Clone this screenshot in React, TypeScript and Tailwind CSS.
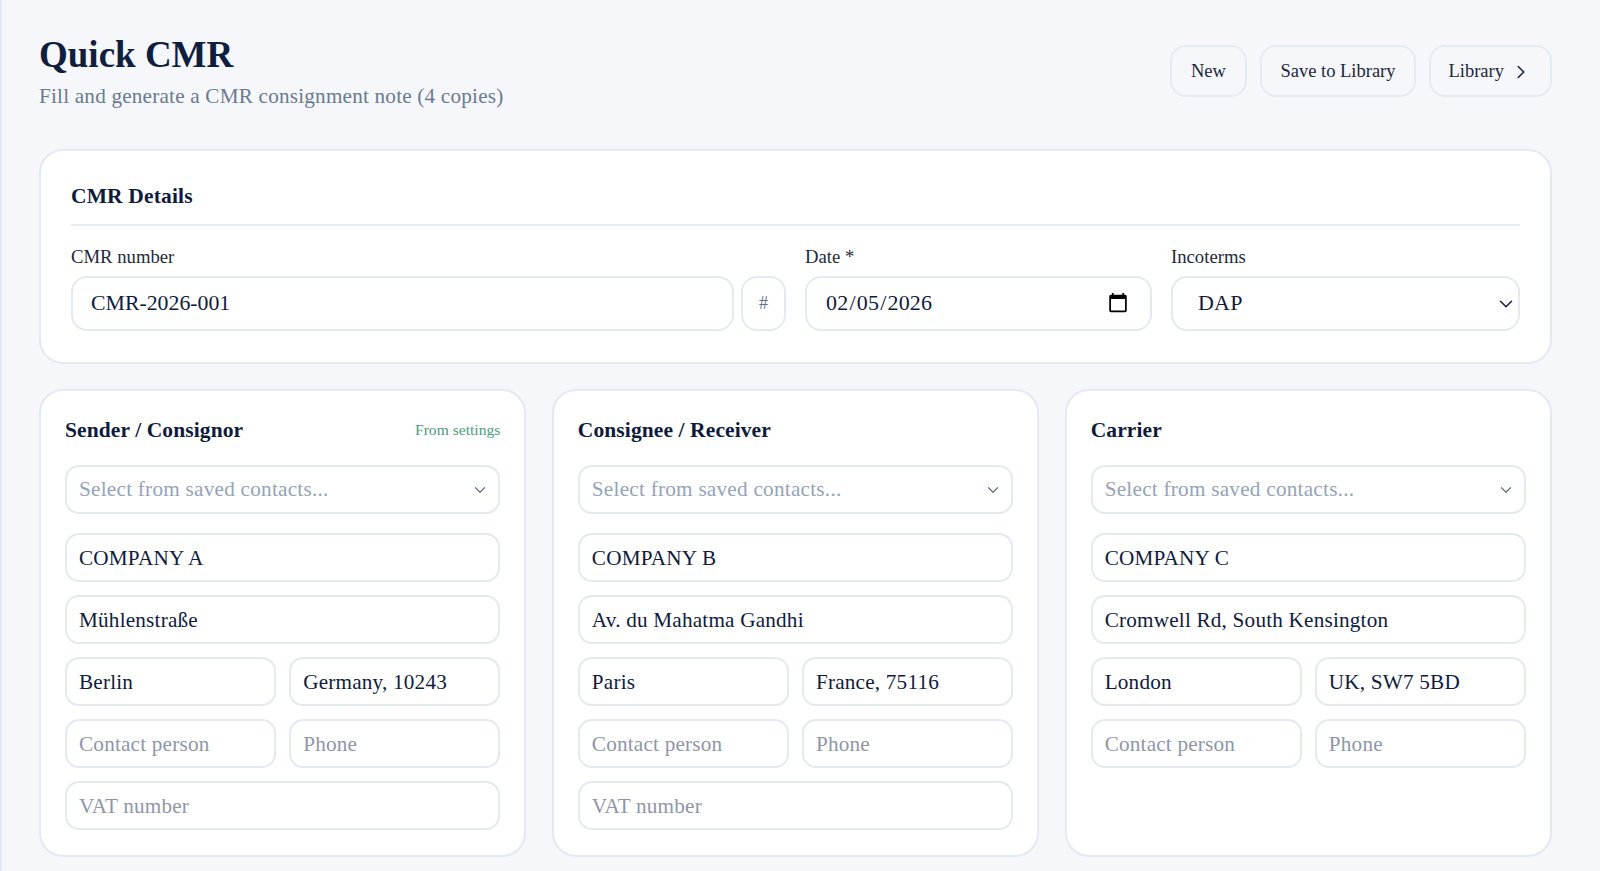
import { ChevronDown, ChevronRight } from "lucide-react";

const serif = "font-['Liberation_Serif','Times_New_Roman',serif]";
const field =
  "h-[49px] w-full min-w-0 rounded-[14px] border-2 border-[#e4e9f2] bg-white px-[12px] pt-[1px] text-[21.2px] text-[#0f1b3d] outline-none placeholder:text-[#8e96a8] tracking-[0.2px]";

function ContactSelect() {
  return (
    <div className="relative">
      <select
        defaultValue=""
        className="h-[49px] w-full appearance-none rounded-[14px] border-2 border-[#e4e9f2] bg-white px-[12px] text-[21.2px] tracking-[0.25px] text-[#94a3b8] outline-none"
      >
        <option value="">Select from saved contacts...</option>
      </select>
      <ChevronDown className="pointer-events-none absolute right-[11px] top-[15.5px] h-[18px] w-[18px] text-[#64748b]" strokeWidth={1.75} />
    </div>
  );
}

function Party({
  title,
  note,
  name,
  street,
  city,
  country,
  vat = true,
}: {
  title: string;
  note?: string;
  name: string;
  street: string;
  city: string;
  country: string;
  vat?: boolean;
}) {
  return (
    <section className="rounded-[24px] border-2 border-[#e4e9f2] bg-white px-[24px] pb-[25px] pt-[24px]">
      <div className="mb-[20px] flex h-[30px] items-center justify-between">
        <h2 className="text-[21.5px] font-bold tracking-[0.1px] text-[#0f1b3d]">{title}</h2>
        {note && <span className="text-[15.6px] text-[#4a9d7c]">{note}</span>}
      </div>
      <div className="flex flex-col gap-[13px]">
        <div className="mb-[6px]">
          <ContactSelect />
        </div>
        <input className={field} defaultValue={name} />
        <input className={field} defaultValue={street} />
        <div className="grid grid-cols-2 gap-[13px]">
          <input className={field} defaultValue={city} />
          <input className={field} defaultValue={country} />
        </div>
        <div className="grid grid-cols-2 gap-[13px]">
          <input className={field} placeholder="Contact person" />
          <input className={field} placeholder="Phone" />
        </div>
        {vat ? <input className={field} placeholder="VAT number" /> : <div className="h-[49px]" />}
      </div>
    </section>
  );
}

const headerBtn =
  "flex h-[52px] items-center rounded-[16px] border-2 border-[#e6ebf3] bg-[#f5f7fa] pt-[2px] text-[18.5px] text-[#1b2740]";

export default function App() {
  return (
    <div className={`${serif} min-h-[871px] overflow-hidden border-l-2 border-[#e4e9f2] bg-[#f5f7fa] pl-[37px] pr-[48px] pt-[33px]`}>
      <header className="flex items-start justify-between">
        <div>
          <h1 className="text-[37px] font-bold leading-[44px] text-[#0f1f3d]">Quick CMR</h1>
          <p className="mt-[5px] text-[21.2px] leading-[28px] tracking-[0.2px] text-[#6b7a90]">
            Fill and generate a CMR consignment note (4 copies)
          </p>
        </div>
        <div className="mt-[12px] flex gap-[13px]">
          <button className={`${headerBtn} px-[19.5px]`}>New</button>
          <button className={`${headerBtn} px-[18px]`}>Save to Library</button>
          <button className={`${headerBtn} pl-[18px] pr-[18px]`}>
            Library
            <ChevronRight className="ml-[6px] h-[22px] w-[22px]" strokeWidth={1.75} />
          </button>
        </div>
      </header>

      <section className="mt-[39px] rounded-[24px] border-2 border-[#e4e9f2] bg-white px-[30px] pb-[31px] pt-[30px]">
        <h2 className="border-b-2 border-[#e8edf3] pb-[13px] text-[21.5px] font-bold leading-[30px] tracking-[0.15px] text-[#0f1b3d]">
          CMR Details
        </h2>
        <div className="mt-[19px] grid grid-cols-[715px_347px_1fr] gap-x-[19px]">
          <div>
            <label className="mb-[7px] block text-[18.7px] leading-[24px] text-[#1e293b]">CMR number</label>
            <div className="flex gap-[7px]">
              <input
                className="h-[55px] min-w-0 flex-1 rounded-[16px] border-2 border-[#e4e9f2] bg-white px-[18px] text-[21.8px] text-[#0f1b3d] outline-none"
                defaultValue="CMR-2026-001"
              />
              <button className="h-[55px] w-[45px] shrink-0 rounded-[16px] border-2 border-[#e4e9f2] bg-white text-[18px] text-[#64748b]">
                #
              </button>
            </div>
          </div>
          <div>
            <label className="mb-[7px] block text-[18.7px] leading-[24px] text-[#1e293b]">Date *</label>
            <input
              type="date"
              lang="en-US"
              defaultValue="2026-02-05"
              className="h-[55px] w-full rounded-[16px] border-2 border-[#e4e9f2] bg-white pb-[2px] pl-[18px] pr-[19px] text-[22px] tracking-[0.2px] text-[#0f1b3d] outline-none"
            />
          </div>
          <div>
            <label className="mb-[7px] block text-[18.7px] leading-[24px] text-[#1e293b]">Incoterms</label>
            <div className="relative">
              <select
                defaultValue="DAP"
                className="h-[55px] w-full appearance-none rounded-[16px] border-2 border-[#e4e9f2] bg-white px-[25px] pb-[2px] text-[22px] tracking-[0.2px] text-[#0f1b3d] outline-none"
              >
                <option>DAP</option>
              </select>
              <ChevronDown className="pointer-events-none absolute right-[3px] top-[16.5px] h-[22px] w-[22px] text-[#1b2740]" strokeWidth={1.75} />
            </div>
          </div>
        </div>
      </section>

      <div className="mt-[25px] grid grid-cols-3 gap-[25.5px]">
        <Party title="Sender / Consignor" note="From settings" name="COMPANY A" street="Mühlenstraße" city="Berlin" country="Germany, 10243" />
        <Party title="Consignee / Receiver" name="COMPANY B" street="Av. du Mahatma Gandhi" city="Paris" country="France, 75116" />
        <Party title="Carrier" name="COMPANY C" street="Cromwell Rd, South Kensington" city="London" country="UK, SW7 5BD" vat={false} />
      </div>
    </div>
  );
}
